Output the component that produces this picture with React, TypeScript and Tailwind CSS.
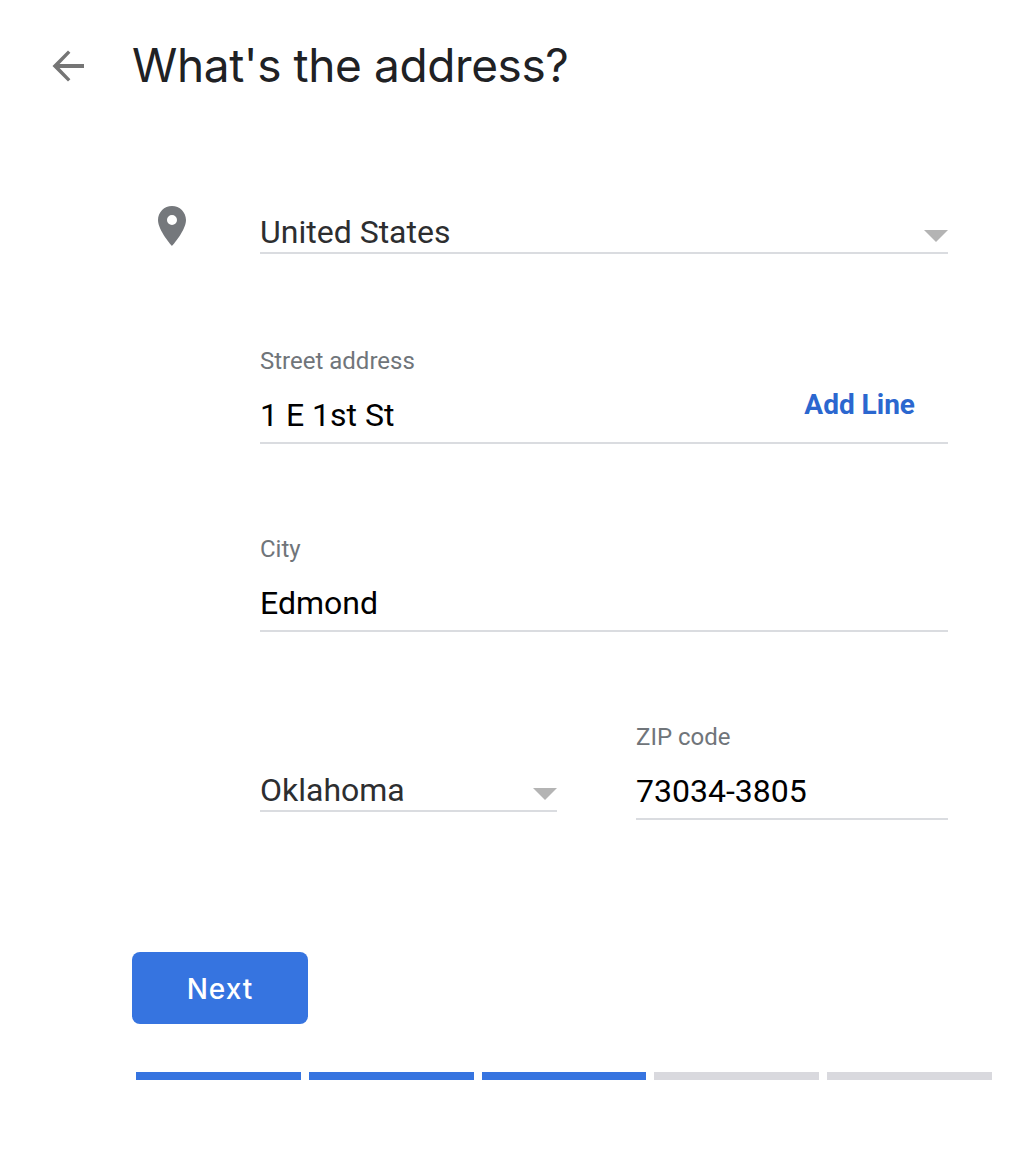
// App.tsx
const font = { roboto: "font-['Roboto',sans-serif]" };

function Caret() {
  return (
    <svg width="24" height="12" viewBox="0 0 24 12" className="mb-[10px] shrink-0" aria-hidden="true">
      <path d="M0 0h24L12 12z" fill="#b4b4b4" />
    </svg>
  );
}

function Field({ label, value, action }: { label: string; value: string; action?: string }) {
  return (
    <div className="flex h-[100px] flex-col border-b-2 border-[#dadce0]">
      <div className="h-[34px] text-[24px] leading-[34px] text-[#70757a]">{label}</div>
      <div className="mt-[18px] flex items-start justify-between">
        <span className="text-[32px] leading-[38px] text-black">{value}</span>
        {action && (
          <button className="mr-[33px] mt-[-7px] text-[28px] leading-[32px] font-bold text-[#2b67cf]">{action}</button>
        )}
      </div>
    </div>
  );
}

export default function App() {
  const steps = [true, true, true, false, false];

  return (
    <div className={`h-[1160px] w-[1032px] bg-white ${font.roboto}`}>
      {/* Header */}
      <div className="flex items-center pl-[52px] pt-[36px]">
        <svg width="32" height="32" viewBox="0 0 32 32" className="shrink-0" aria-label="Back">
          <path d="M32 14H7.6L18.400 2.800 16 .5 .5 16 16 31.500 18.400 29.200 7.600 18H32z" fill="#757575" />
        </svg>
        <h1 className="ml-[48px] pb-[2px] font-['Inter',sans-serif] text-[46px] leading-[58px] font-normal tracking-[-0.4px] text-[#202124]">
          What's the address?
        </h1>
      </div>

      <div className="mt-[110px] flex">
        <div className="ml-[158px] w-[102px] shrink-0">
          <svg width="28" height="40" viewBox="0 0 28 40" aria-hidden="true">
            <path
              fillRule="evenodd"
              d="M14 0C6.300 0 0 6.200 0 14c0 10.500 14 26 14 26s14-15.500 14-26C28 6.200 21.700 0 14 0zm0 19a5 5 0 1 1 0-10 5 5 0 0 1 0 10z"
              fill="#75787c"
            />
          </svg>
        </div>

        <div className="w-[688px]">
          {/* Country */}
          <div className="flex h-[48px] items-end justify-between border-b-2 border-[#dadce0]">
            <span className="pt-[2px] text-[32px] leading-[40px] text-[#2d2e30]">United States</span>
            <Caret />
          </div>

          <div className="mt-[90px]">
            <Field label="Street address" value="1 E 1st St" action="Add Line" />
          </div>
          <div className="mt-[88px]">
            <Field label="City" value="Edmond" />
          </div>

          {/* State and ZIP */}
          <div className="mt-[88px] flex items-start gap-[79px]">
            <div className="mt-[42px] flex h-[50px] w-[297px] items-end justify-between border-b-2 border-[#dadce0]">
              <span className="pb-[1px] text-[32px] leading-[38px] text-[#2d2e30]">Oklahoma</span>
              <Caret />
            </div>
            <div className="w-[312px]">
              <Field label="ZIP code" value="73034-3805" />
            </div>
          </div>
        </div>
      </div>

      {/* Next */}
      <button className="ml-[132px] mt-[132px] flex h-[72px] w-[176px] items-center justify-center rounded-[8px] bg-[#3674e0] pt-[1px] font-['Inter',sans-serif] text-[28px] font-medium tracking-[1px] text-white">
        Next
      </button>

      {/* Progress */}
      <div className="ml-[136px] mt-[48px] grid w-[856px] grid-cols-5 gap-[8px]">
        {steps.map((done, i) => (
          <div key={i} className={done ? "h-[8px] bg-[#3674e0]" : "h-[8px] bg-[#d9d9de]"} />
        ))}
      </div>
    </div>
  );
}
